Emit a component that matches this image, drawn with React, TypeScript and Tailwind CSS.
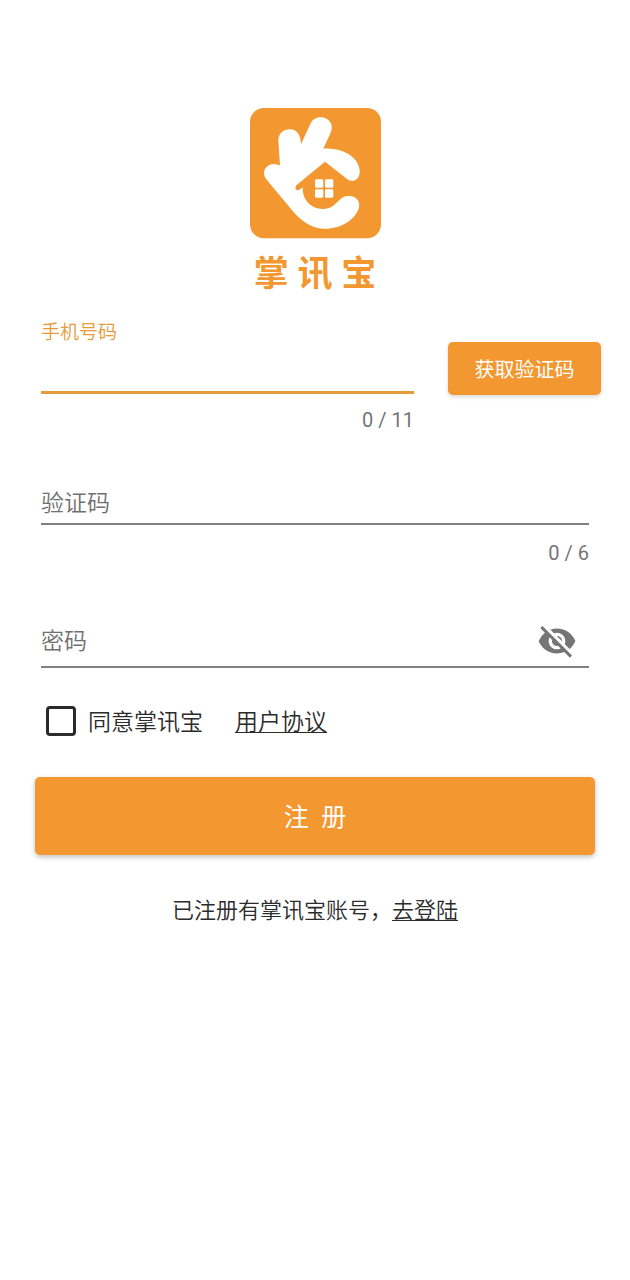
import { useState } from 'react';
import { MdVisibility, MdVisibilityOff } from 'react-icons/md';

function Logo() {
  return (
    <svg viewBox="0 0 393 393" className="size-[131px]" role="img" aria-label="掌讯宝">
      <rect width="393" height="391" rx="42" fill="#f39730" />
      <g transform="translate(-30 -38)" fill="#fff">
        <path d="M80 253C64 235 73 208 100 206C108 206 115 209 120 210L115 138C114 112 134 101 150 102C170 103 182 116 183 147L212 84C222 63 248 62 261 71C275 80 279 94 272 112L250 160C292 158 330 171 349 198C364 221 362 247 346 254C338 258 330 257 324 253L255 199L169 270C163 280 169 287 177 284L188 276C187 313 212 342 251 341C290 339 294 305 322 302C346 299 362 316 357 337C347 371 305 401 252 400C210 399 177 370 155 343Z" />
        <rect x="225" y="252" width="25" height="25" rx="4" />
        <rect x="255" y="252" width="25" height="25" rx="4" />
        <rect x="225" y="282" width="25" height="25" rx="4" />
        <rect x="255" y="282" width="25" height="25" rx="4" />
      </g>
    </svg>
  );
}

export default function App() {
  const [phone, setPhone] = useState('');
  const [code, setCode] = useState('');
  const [password, setPassword] = useState('');
  const [agreed, setAgreed] = useState(false);
  const [visible, setVisible] = useState(false);

  return (
    <main className="min-h-screen bg-white px-[35px] pt-[108px] pb-10 font-['Roboto','Noto_Sans_CJK_SC',sans-serif] text-[#2b2b2b]">
      <header className="flex flex-col items-center">
        <Logo />
        <h1 className="mt-4 text-[35px] leading-10 font-bold text-[#f39730]">掌 讯 宝</h1>
      </header>

      <form className="mt-6" onSubmit={(e) => e.preventDefault()}>
        <div className="-mr-1.5 ml-1.5 flex items-start gap-[34px]">
          <div className="min-w-0 flex-1">
            <label htmlFor="phone" className="block text-[19px] leading-7 font-[350] text-[#e69b3a]">
              手机号码
            </label>
            <input
              id="phone"
              type="tel"
              maxLength={11}
              value={phone}
              onChange={(e) => setPhone(e.target.value)}
              className="block h-[47px] w-full border-b-3 border-[#e69b3a] text-[23px] outline-none"
            />
            <p className="mt-3 text-right text-xl leading-7 text-[#757575]">{phone.length} / 11</p>
          </div>
          <button
            type="button"
            className="mt-[23px] h-[53px] w-[153px] rounded-[5px] bg-[#f39730] pt-0.5 text-xl text-white shadow-[0_2px_4px_rgba(0,0,0,0.15)]"
          >
            获取验证码
          </button>
        </div>

        <div className="mx-1.5 mt-12 flex h-[43px] items-center gap-3 border-b-2 border-[#808080]">
          <label htmlFor="code" className="pt-1 text-[23px] font-[350] text-[#707070]">
            验证码
          </label>
          <input
            id="code"
            inputMode="numeric"
            maxLength={6}
            value={code}
            onChange={(e) => setCode(e.target.value)}
            className="min-w-0 flex-1 text-[23px] outline-none"
          />
        </div>
        <p className="mx-1.5 mt-3.5 text-right text-xl leading-7 text-[#757575]">{code.length} / 6</p>

        <div className="mx-1.5 mt-12 flex h-[53px] items-center gap-3 border-b-2 border-[#808080] pr-3">
          <label htmlFor="password" className="pt-1 text-[23px] font-[350] text-[#707070]">
            密码
          </label>
          <input
            id="password"
            type={visible ? 'text' : 'password'}
            value={password}
            onChange={(e) => setPassword(e.target.value)}
            className="min-w-0 flex-1 text-[23px] outline-none"
          />
          <button type="button" aria-label="显示密码" onClick={() => setVisible(!visible)} className="text-[#757575]">
            {visible ? <MdVisibility className="size-10" /> : <MdVisibilityOff className="size-10" />}
          </button>
        </div>

        <div className="mt-[38px] ml-[11px] flex h-[30px] items-center gap-3 text-[23px] font-[350]">
          <input
            id="agree"
            type="checkbox"
            checked={agreed}
            onChange={(e) => setAgreed(e.target.checked)}
            className="size-[30px] appearance-none rounded-sm border-3 border-[#2b2b2b] checked:bg-[#f39730]"
          />
          <label htmlFor="agree" className="pt-1">
            同意掌讯宝
          </label>
          <a href="#agreement" className="ml-5 pt-1 underline decoration-1 underline-offset-2">
            用户协议
          </a>
        </div>

        <button
          type="submit"
          className="mt-[41px] h-[78px] w-full rounded-[5px] bg-[#f39730] pt-1 text-[25px] whitespace-pre text-white shadow-[0_2px_5px_rgba(0,0,0,0.25)]"
        >
          {'注  册'}
        </button>
      </form>

      <p className="mt-10 text-center text-[22px] leading-8 font-[350]">
        已注册有掌讯宝账号，
        <a href="#login" className="underline decoration-1 underline-offset-2">
          去登陆
        </a>
      </p>
    </main>
  );
}
